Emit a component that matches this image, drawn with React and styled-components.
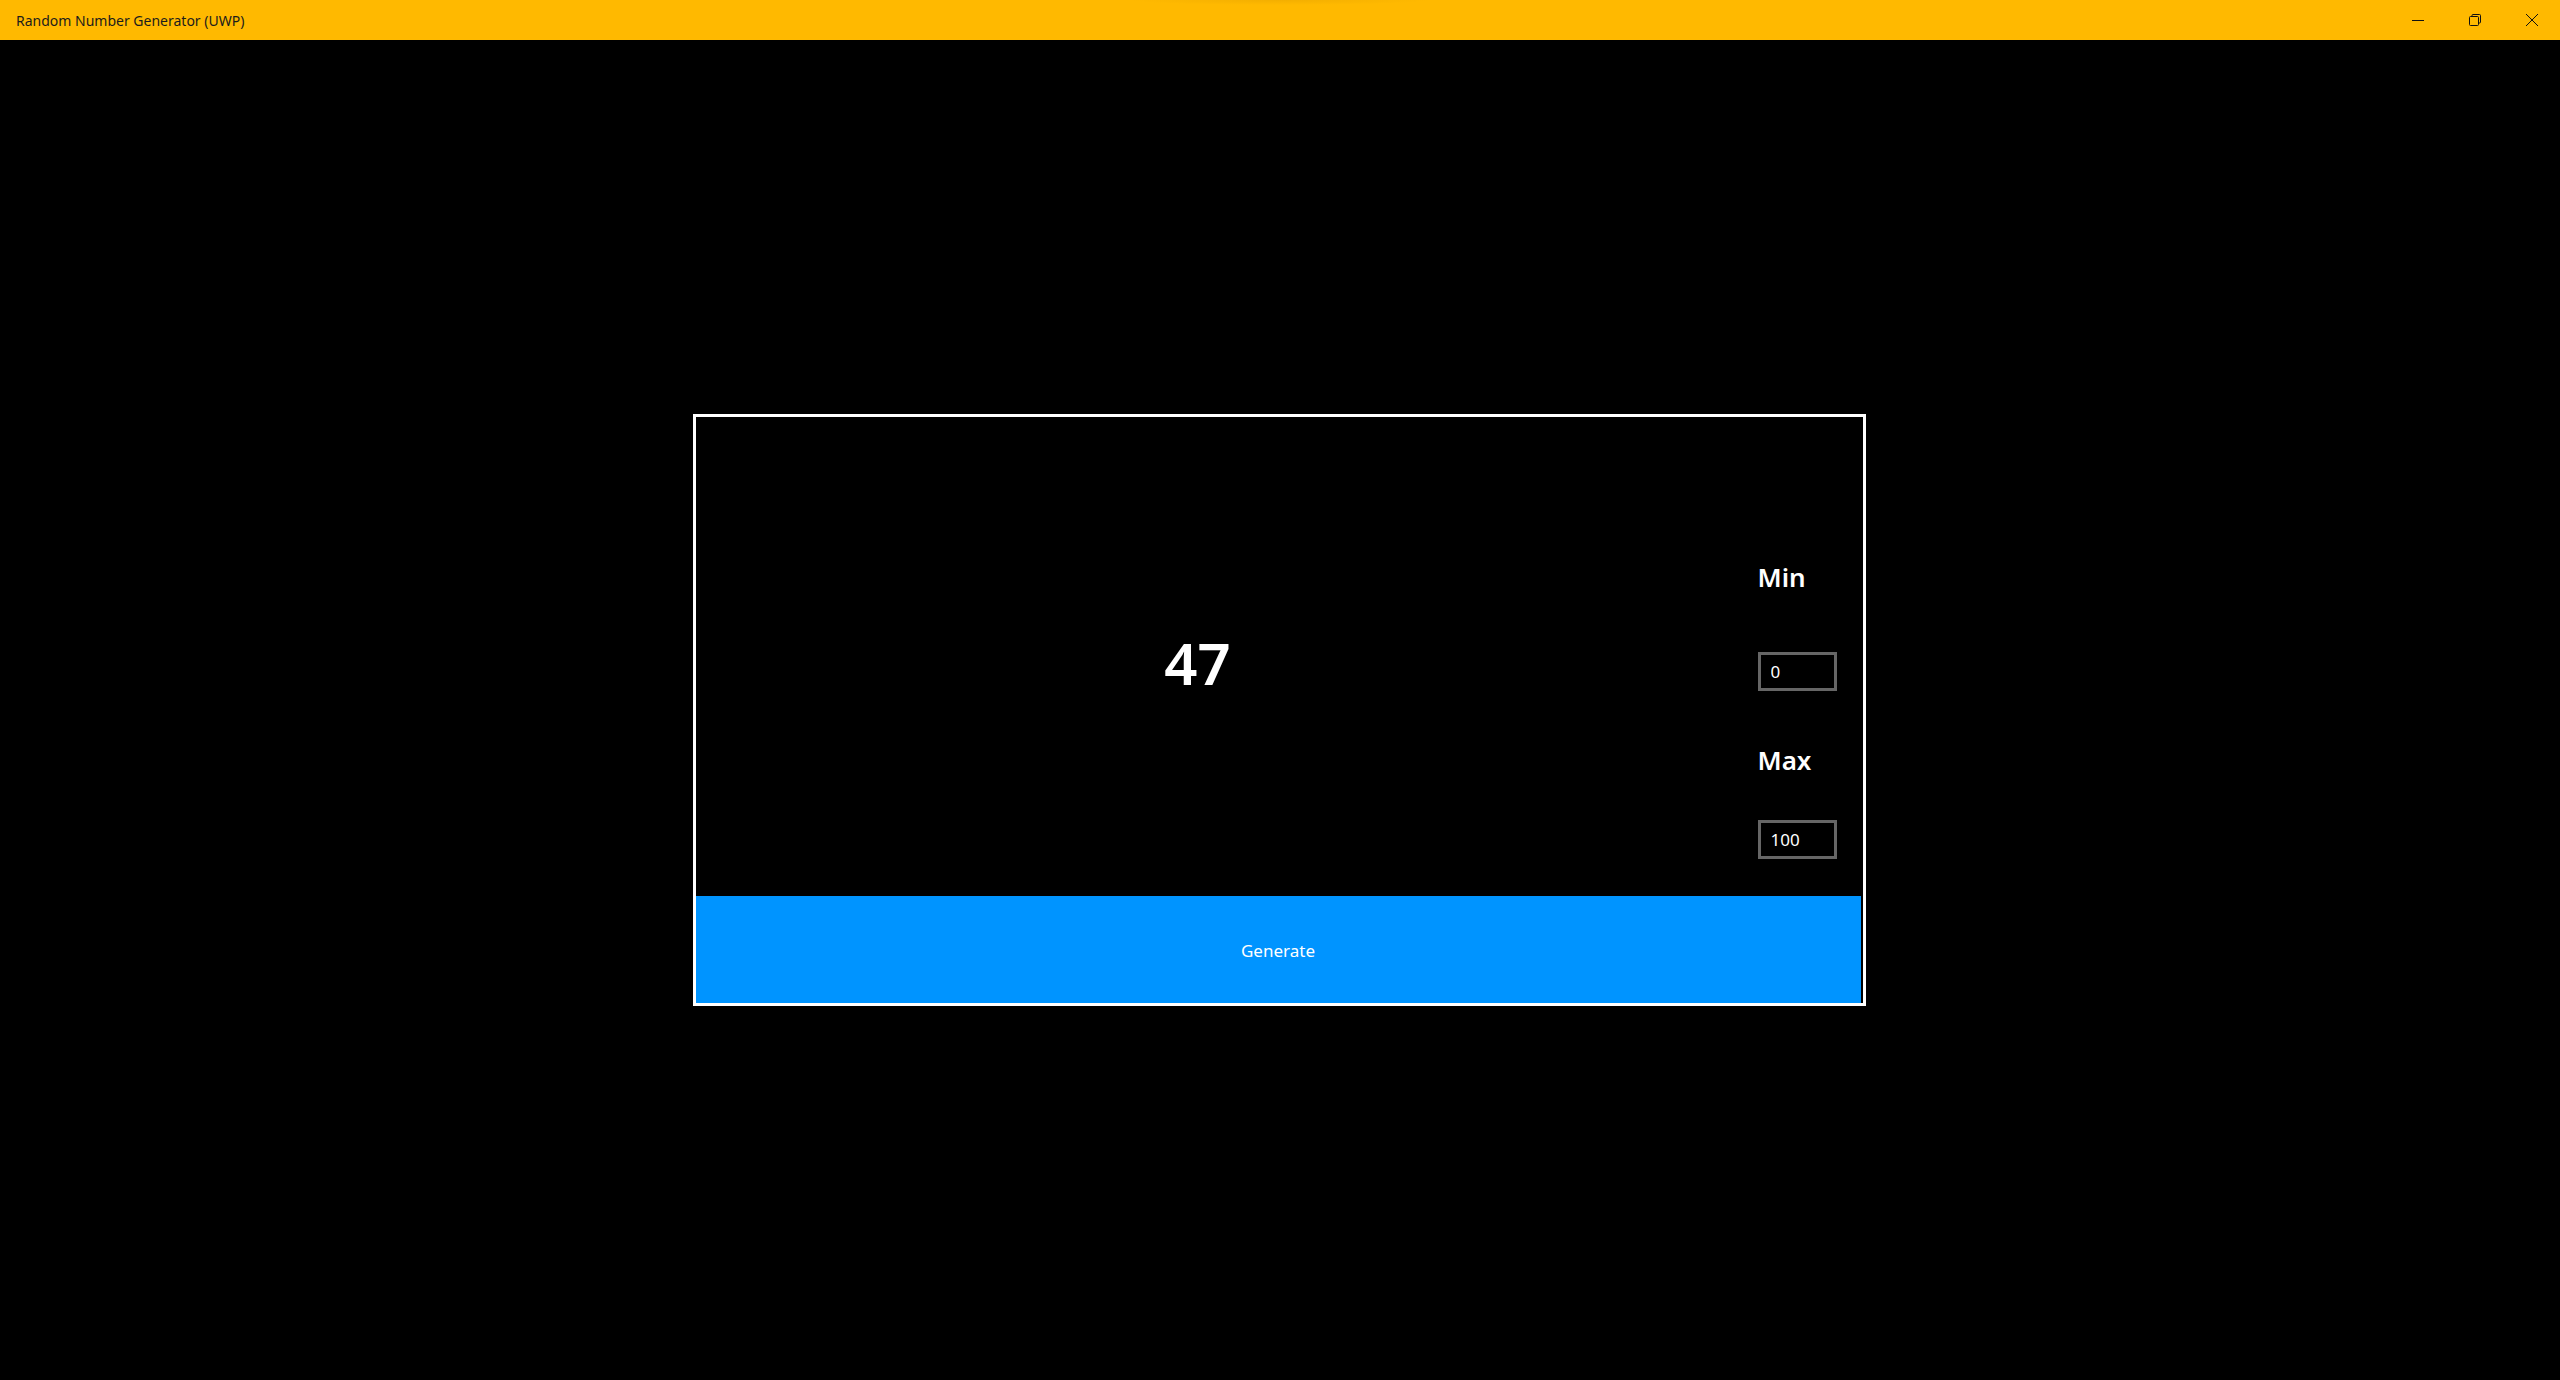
import React, { useState } from 'react';
import styled, { createGlobalStyle } from 'styled-components';

const GlobalStyle = createGlobalStyle`
  html, body {
    margin: 0;
    padding: 0;
    background: #000;
    font-family: "Segoe UI", "Noto Sans", "Open Sans", sans-serif;
  }
`;

const Window = styled.div`
  display: flex;
  flex-direction: column;
  height: 100vh;
  background: #000;
`;

const TitleBar = styled.div`
  display: flex;
  align-items: center;
  height: 40px;
  flex-shrink: 0;
  background:
    radial-gradient(ellipse 150px 5px at 50% 0, rgba(160, 100, 0, 0.12), rgba(160, 100, 0, 0) 100%),
    #ffb900;
`;

const Title = styled.div`
  padding-left: 16px;
  font-size: 14px;
  color: #1c1c1c;
`;

const Controls = styled.div`
  display: flex;
  height: 100%;
  margin-left: auto;
`;

const ControlButton = styled.div`
  display: flex;
  align-items: center;
  justify-content: center;
  width: 57px;
  height: 100%;
  color: #111;
`;

const Main = styled.div`
  flex: 1;
  display: flex;
  align-items: center;
  justify-content: center;
  padding: 0 2px 0 0;
`;

const Card = styled.div`
  box-sizing: border-box;
  width: 1173px;
  border: 3px solid #fff;
  display: flex;
  flex-direction: column;
`;

const Body = styled.div`
  display: grid;
  grid-template-columns: 1004px 1fr;
  height: 479px;
`;

const ResultPane = styled.div`
  display: flex;
  align-items: center;
  justify-content: center;
`;

const Result = styled.div`
  color: #fff;
  font-size: 58px;
  font-weight: 600;
  line-height: 1;
  padding-top: 12px;
`;

const SidePane = styled.div`
  display: flex;
  flex-direction: column;
  align-items: flex-start;
  padding: 147px 0 0 58px;
`;

const Label = styled.div`
  color: #fff;
  font-size: 26px;
  font-weight: 600;
  line-height: 27px;
  height: 27px;
  margin-top: ${p => p.$gap || 0}px;
`;

const NumberInput = styled.input`
  box-sizing: border-box;
  width: 79px;
  height: 39px;
  margin-top: ${p => p.$gap || 0}px;
  padding: 0 0 0 10px;
  background: #000;
  border: 3px solid #666;
  color: #fff;
  font-family: inherit;
  font-size: 17px;
  outline: none;
`;

const GenerateButton = styled.button`
  width: calc(100% - 2px);
  height: 107px;
  border: none;
  background: #0094ff;
  color: #fff;
  font-family: inherit;
  font-size: 17px;
  padding-top: 2px;
  cursor: pointer;
`;

const App = () => {
  const [min, setMin] = useState('0');
  const [max, setMax] = useState('100');
  const [value, setValue] = useState(47);

  const generate = () => {
    const lo = parseInt(min, 10) || 0;
    const hi = parseInt(max, 10) || 0;
    setValue(Math.floor(Math.random() * (hi - lo + 1)) + lo);
  };

  return (
    <>
      <GlobalStyle />
      <Window>
        <TitleBar>
          <Title>Random Number Generator (UWP)</Title>
          <Controls>
            <ControlButton>
              <svg width="12" height="12" viewBox="0 0 12 12">
                <line x1="0" y1="6.5" x2="12" y2="6.5" stroke="currentColor" strokeWidth="1" />
              </svg>
            </ControlButton>
            <ControlButton>
              <svg width="12" height="12" viewBox="0 0 12 12" fill="none" stroke="currentColor" strokeWidth="1">
                <path d="M3 2.5 V1.5 Q3 0.5 4 0.5 H10.5 Q11.5 0.5 11.5 1.5 V8 Q11.5 9 10.5 9 H9.5" />
                <rect x="0.5" y="2.5" width="9" height="9" rx="1" />
              </svg>
            </ControlButton>
            <ControlButton>
              <svg width="12" height="12" viewBox="0 0 12 12" stroke="currentColor" strokeWidth="1">
                <line x1="0" y1="0" x2="12" y2="12" />
                <line x1="12" y1="0" x2="0" y2="12" />
              </svg>
            </ControlButton>
          </Controls>
        </TitleBar>
        <Main>
          <Card>
            <Body>
              <ResultPane>
                <Result>{value}</Result>
              </ResultPane>
              <SidePane>
                <Label>Min</Label>
                <NumberInput $gap={61} value={min} onChange={e => setMin(e.target.value)} />
                <Label $gap={56}>Max</Label>
                <NumberInput $gap={46} value={max} onChange={e => setMax(e.target.value)} />
              </SidePane>
            </Body>
            <GenerateButton onClick={generate}>Generate</GenerateButton>
          </Card>
        </Main>
      </Window>
    </>
  );
};

export default App;
